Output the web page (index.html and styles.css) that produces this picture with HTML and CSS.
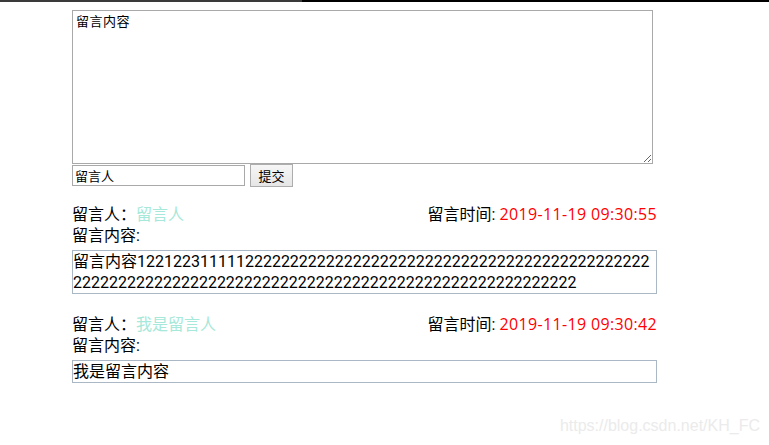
FILE: index.html
```html
<!DOCTYPE html>
<html lang="zh">
<head>
<meta charset="utf-8">
<title>留言板</title>
<link rel="stylesheet" href="styles.css">
</head>
<body>
<div class="topbar"><div class="topbar-left"></div></div>
<div class="page">
  <textarea class="msg-input">留言内容</textarea>
  <div class="form-row">
    <input class="name-input" type="text" value="留言人">
    <button class="submit" type="button">提交</button>
  </div>
  <div class="list">
    <div class="item">
      <div class="item-head">
        <div><span>留言人：</span><span class="name">留言人</span></div>
        <div>留言时间: <span class="time">2019-11-19 09:30:55</span></div>
      </div>
      <div class="label">留言内容:</div>
      <div class="content">留言内容12212231111122222222222222222222222222222222222222222222222222222222222222222222222222222222222222222222222222222</div>
    </div>
    <div class="item">
      <div class="item-head">
        <div><span>留言人：</span><span class="name">我是留言人</span></div>
        <div>留言时间: <span class="time">2019-11-19 09:30:42</span></div>
      </div>
      <div class="label">留言内容:</div>
      <div class="content">我是留言内容</div>
    </div>
  </div>
</div>
<div class="watermark">https://blog.csdn.net/KH_FC</div>
</body>
</html>
```

FILE: styles.css
```css
html, body {
  margin: 0;
  padding: 0;
  background: #fff;
}

body {
  font-family: Roboto, "Noto Sans CJK SC", sans-serif;
  font-size: 16px;
  color: #000;
  height: 445px;
  overflow: hidden;
}

.topbar {
  height: 2px;
  background: #000;
  display: flex;
}

.topbar-left {
  width: 302px;
  background: #3a3a3a;
}

.page {
  width: 585px;
  margin-left: 72px;
  padding-top: 8px;
}

.msg-input {
  display: block;
  box-sizing: border-box;
  width: 581px;
  height: 154px;
  margin: 0;
  padding: 2px 3px;
  border: 1px solid #a9a9a9;
  font-family: "Noto Sans CJK SC", sans-serif;
  font-size: 13px;
  line-height: 15px;
  letter-spacing: 0.5px;
  color: #000;
}

.form-row {
  display: flex;
  align-items: center;
  gap: 5px;
}

.name-input {
  box-sizing: border-box;
  width: 173px;
  height: 21px;
  margin: 0;
  padding: 0 2px;
  border: 1px solid #a9a9a9;
  font-family: "Noto Sans CJK SC", sans-serif;
  font-size: 13px;
  color: #000;
}

.submit {
  box-sizing: border-box;
  width: 43px;
  height: 23px;
  margin: 0;
  padding: 0;
  border: 1px solid #adadad;
  background: linear-gradient(#f6f6f6, #e6e6e6);
  font-family: "Noto Sans CJK SC", sans-serif;
  font-size: 13px;
  color: #000;
}

.list {
  margin-top: 17px;
}

.item {
  margin-bottom: 20px;
  line-height: 21px;
}

.item-head {
  display: flex;
  justify-content: space-between;
}

.name {
  color: #a6e8d9;
}

.time {
  font-family: "Open Sans", "Noto Sans CJK SC", sans-serif;
  letter-spacing: 0.35px;
  color: #ff0000;
}

.content {
  margin-top: 4px;
  border: 1px solid #aab8c6;
  padding: 0;
  word-break: break-all;
}

.watermark {
  position: absolute;
  right: 9px;
  top: 417px;
  font-family: "Liberation Sans", sans-serif;
  font-size: 16px;
  color: #ebebeb;
}
```
